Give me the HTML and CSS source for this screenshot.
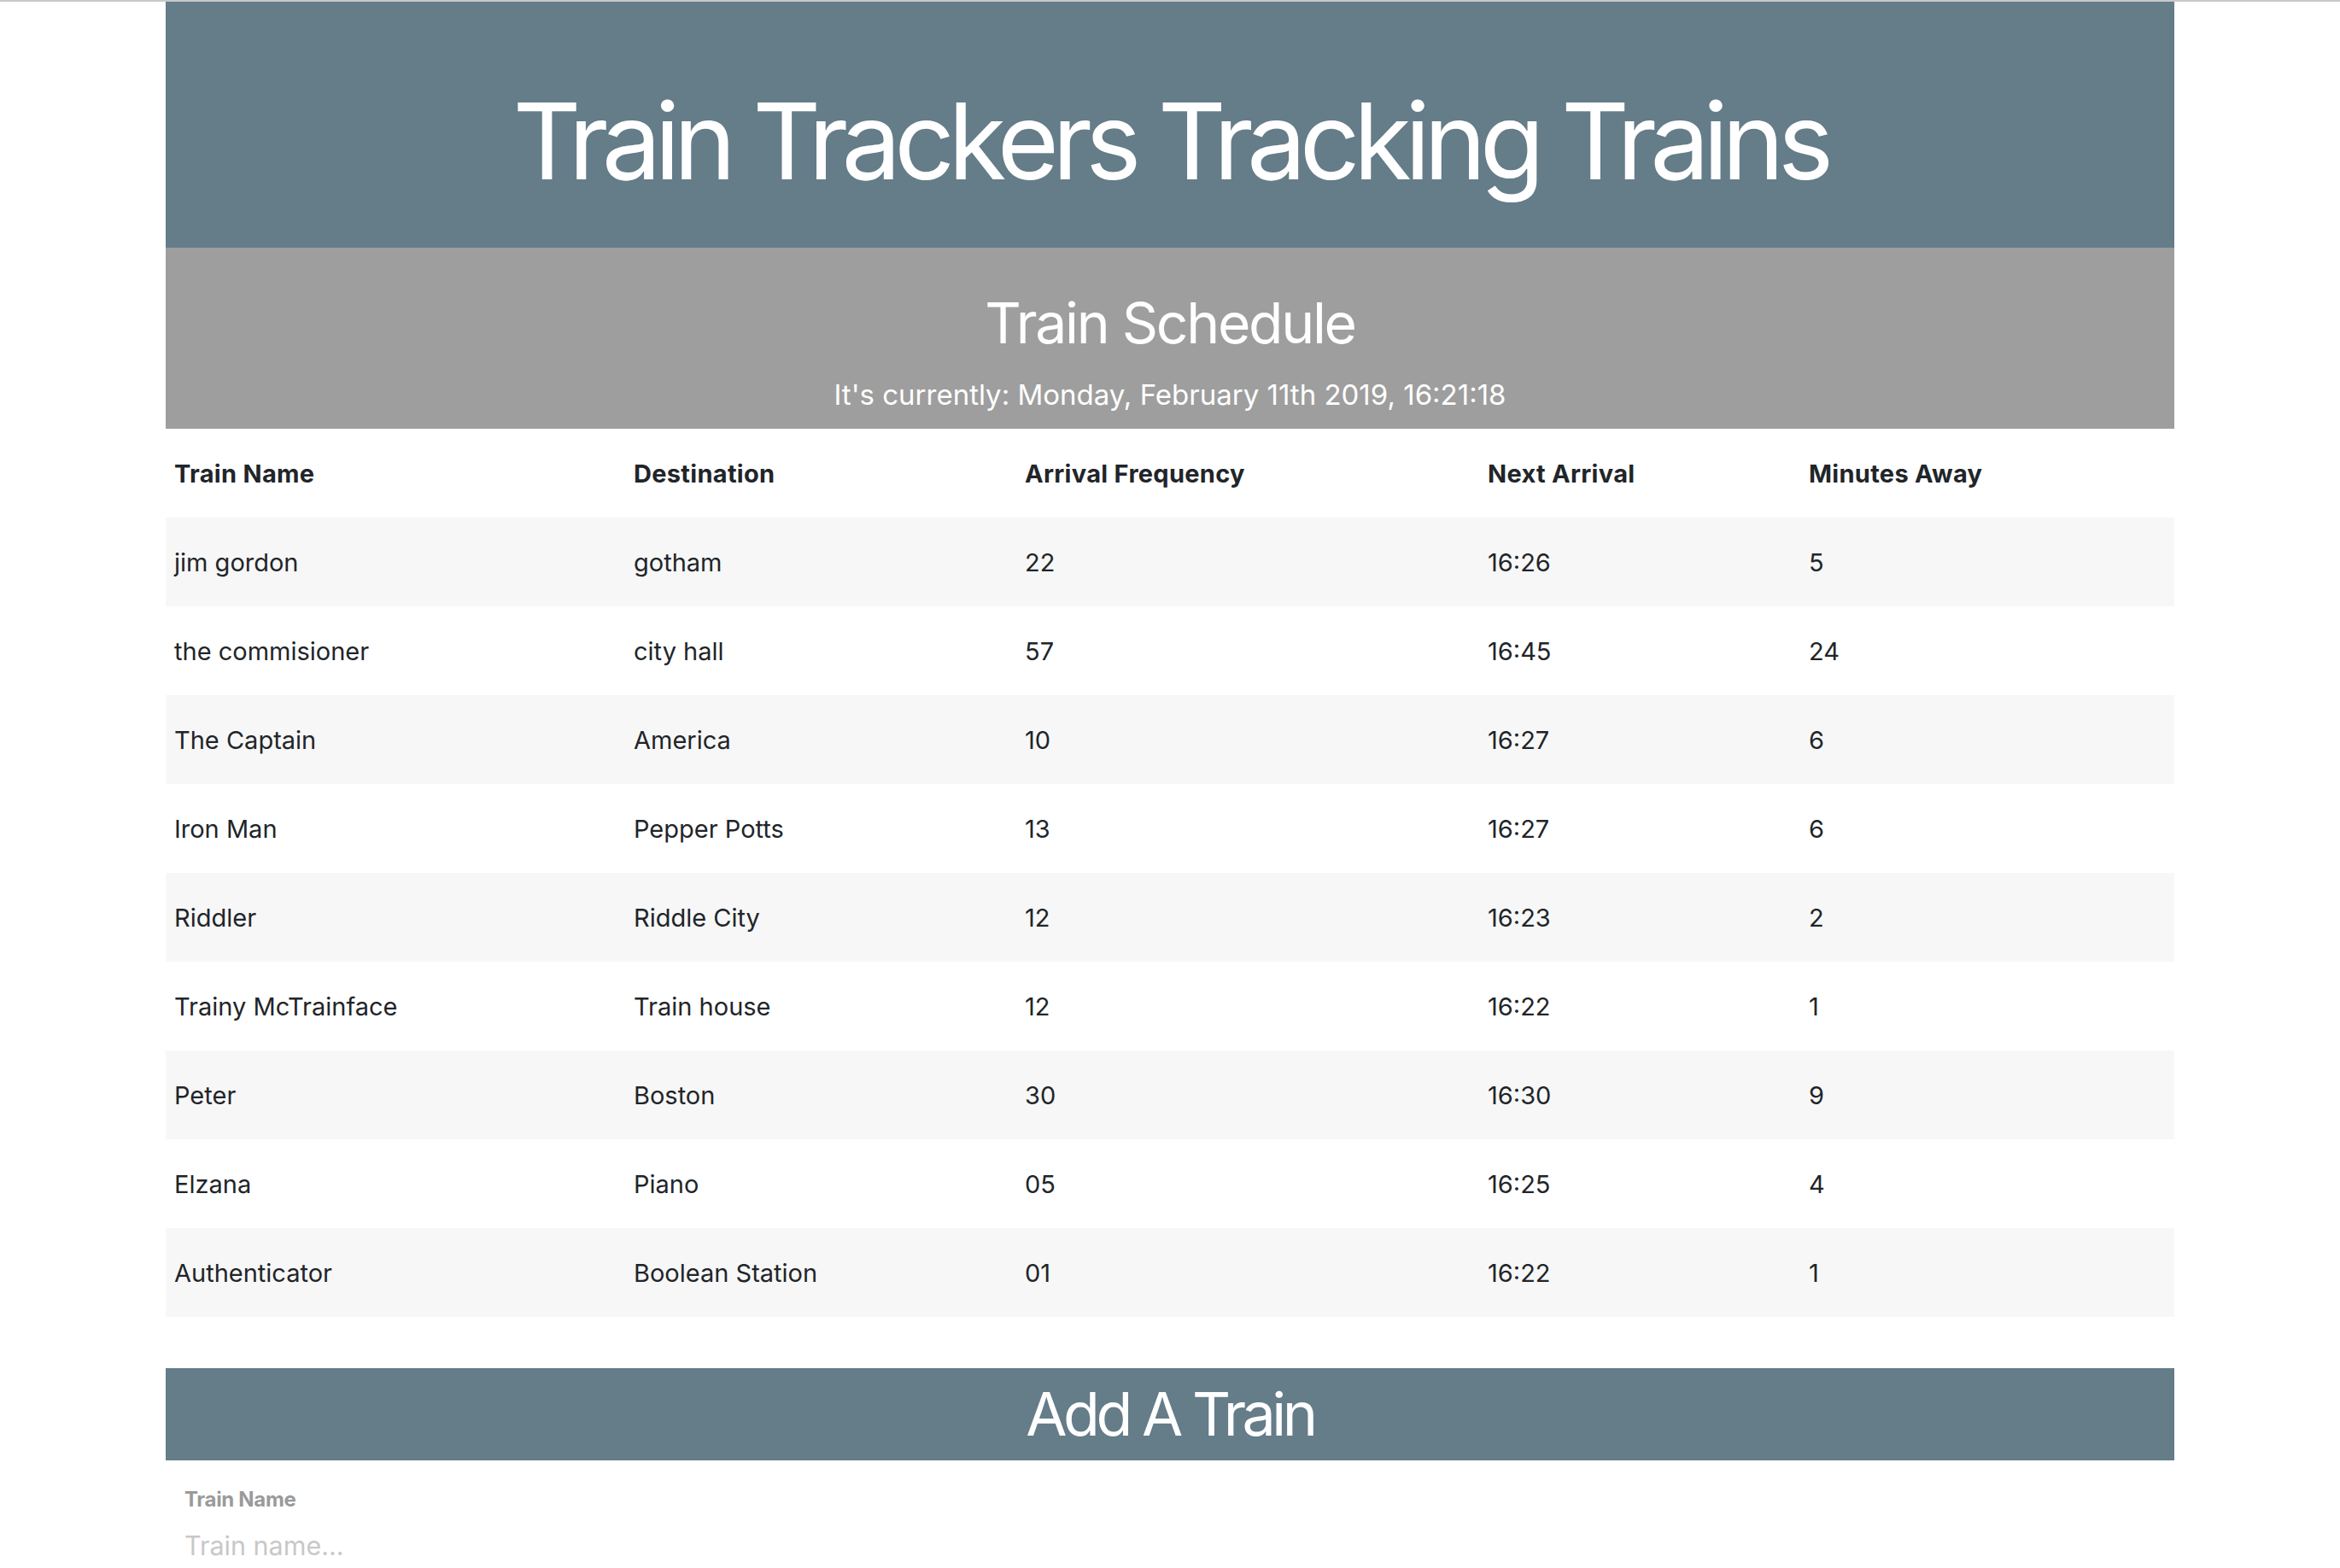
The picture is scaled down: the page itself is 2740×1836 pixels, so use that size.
FILE: index.html
```html
<!DOCTYPE html>
<html lang="en">
<head>
<meta charset="utf-8">
<title>Train Trackers Tracking Trains</title>
<link rel="stylesheet" href="styles.css">
</head>
<body>
<div class="topline"></div>
<div class="container">
  <header class="jumbo">
    <h1 class="title">Train Trackers Tracking Trains</h1>
  </header>
  <section class="schedule-head">
    <h2 class="schedule-title">Train Schedule</h2>
    <p class="clock">It's currently: Monday, February 11th 2019, 16:21:18</p>
  </section>
  <table class="trains">
    <colgroup>
      <col class="c1"><col class="c2"><col class="c3"><col class="c4"><col class="c5">
    </colgroup>
    <thead>
      <tr><th>Train Name</th><th>Destination</th><th>Arrival Frequency</th><th>Next Arrival</th><th>Minutes Away</th></tr>
    </thead>
    <tbody>
      <tr><td>jim gordon</td><td>gotham</td><td>22</td><td>16:26</td><td>5</td></tr>
      <tr><td>the commisioner</td><td>city hall</td><td>57</td><td>16:45</td><td>24</td></tr>
      <tr><td>The Captain</td><td>America</td><td>10</td><td>16:27</td><td>6</td></tr>
      <tr><td>Iron Man</td><td>Pepper Potts</td><td>13</td><td>16:27</td><td>6</td></tr>
      <tr><td>Riddler</td><td>Riddle City</td><td>12</td><td>16:23</td><td>2</td></tr>
      <tr><td>Trainy McTrainface</td><td>Train house</td><td>12</td><td>16:22</td><td>1</td></tr>
      <tr><td>Peter</td><td>Boston</td><td>30</td><td>16:30</td><td>9</td></tr>
      <tr><td>Elzana</td><td>Piano</td><td>05</td><td>16:25</td><td>4</td></tr>
      <tr><td>Authenticator</td><td>Boolean Station</td><td>01</td><td>16:22</td><td>1</td></tr>
    </tbody>
  </table>
  <section class="add">
    <h2 class="add-title">Add A Train</h2>
    <form class="add-form">
      <label class="field-label" for="name">Train Name</label>
      <input class="field-input" id="name" type="text" placeholder="Train name...">
      <label class="field-label" for="dest">Destination</label>
      <input class="field-input" id="dest" type="text" placeholder="Destination...">
    </form>
  </section>
</div>
</body>
</html>
```

FILE: styles.css
```css
html, body {
  margin: 0;
  padding: 0;
  background: #ffffff;
}
body {
  font-family: Inter, "Liberation Sans", Arial, sans-serif;
  color: #212529;
}
.topline {
  height: 2px;
  background: #c9c9c9;
}
.container {
  width: 2352px;
  margin: 0 auto;
}
.jumbo {
  background: #657c89;
  height: 288px;
  display: flex;
  align-items: center;
  justify-content: center;
}
.title {
  margin: 0;
  color: #ffffff;
  font-weight: 400;
  font-size: 124px;
  letter-spacing: -7.8px;
  line-height: 1;
  padding-top: 38px;
}
.schedule-head {
  background: #9e9e9e;
  height: 212px;
  box-sizing: border-box;
  padding-top: 55px;
  text-align: center;
  color: #ffffff;
}
.schedule-title {
  margin: 0;
  font-size: 66px;
  font-weight: 400;
  line-height: 1;
  letter-spacing: -2.3px;
}
.clock {
  margin: 32px 0 0;
  font-size: 33px;
  line-height: 1.2;
}
.trains {
  width: 100%;
  border-collapse: collapse;
  font-size: 29px;
}
.c1 { width: 538px; }
.c2 { width: 458px; }
.c3 { width: 542px; }
.c4 { width: 376px; }
.c5 { width: 438px; }
.trains th, .trains td {
  height: 104px;
  padding: 0 10px;
  text-align: left;
  vertical-align: middle;
  box-sizing: border-box;
}
.trains th {
  font-weight: 700;
  letter-spacing: 0.3px;
}
.trains tbody tr:nth-child(odd) {
  background: #f7f7f7;
}
.add {
  margin-top: 60px;
}
.add-title {
  margin: 0;
  background: #657c89;
  color: #ffffff;
  text-align: center;
  font-weight: 400;
  font-size: 70px;
  height: 108px;
  line-height: 108px;
  letter-spacing: -4.5px;
}
.add-form {
  display: flex;
  flex-direction: column;
  padding: 31px 22px;
}
.field-label {
  font-size: 24px;
  font-weight: 700;
  color: #9a9a9a;
  letter-spacing: -0.3px;
}
.field-input {
  border: none;
  outline: none;
  font-family: inherit;
  font-size: 30.5px;
  padding: 21px 0 30px;
  color: #495057;
}
.field-input::placeholder {
  color: #c8c8c8;
}
```
